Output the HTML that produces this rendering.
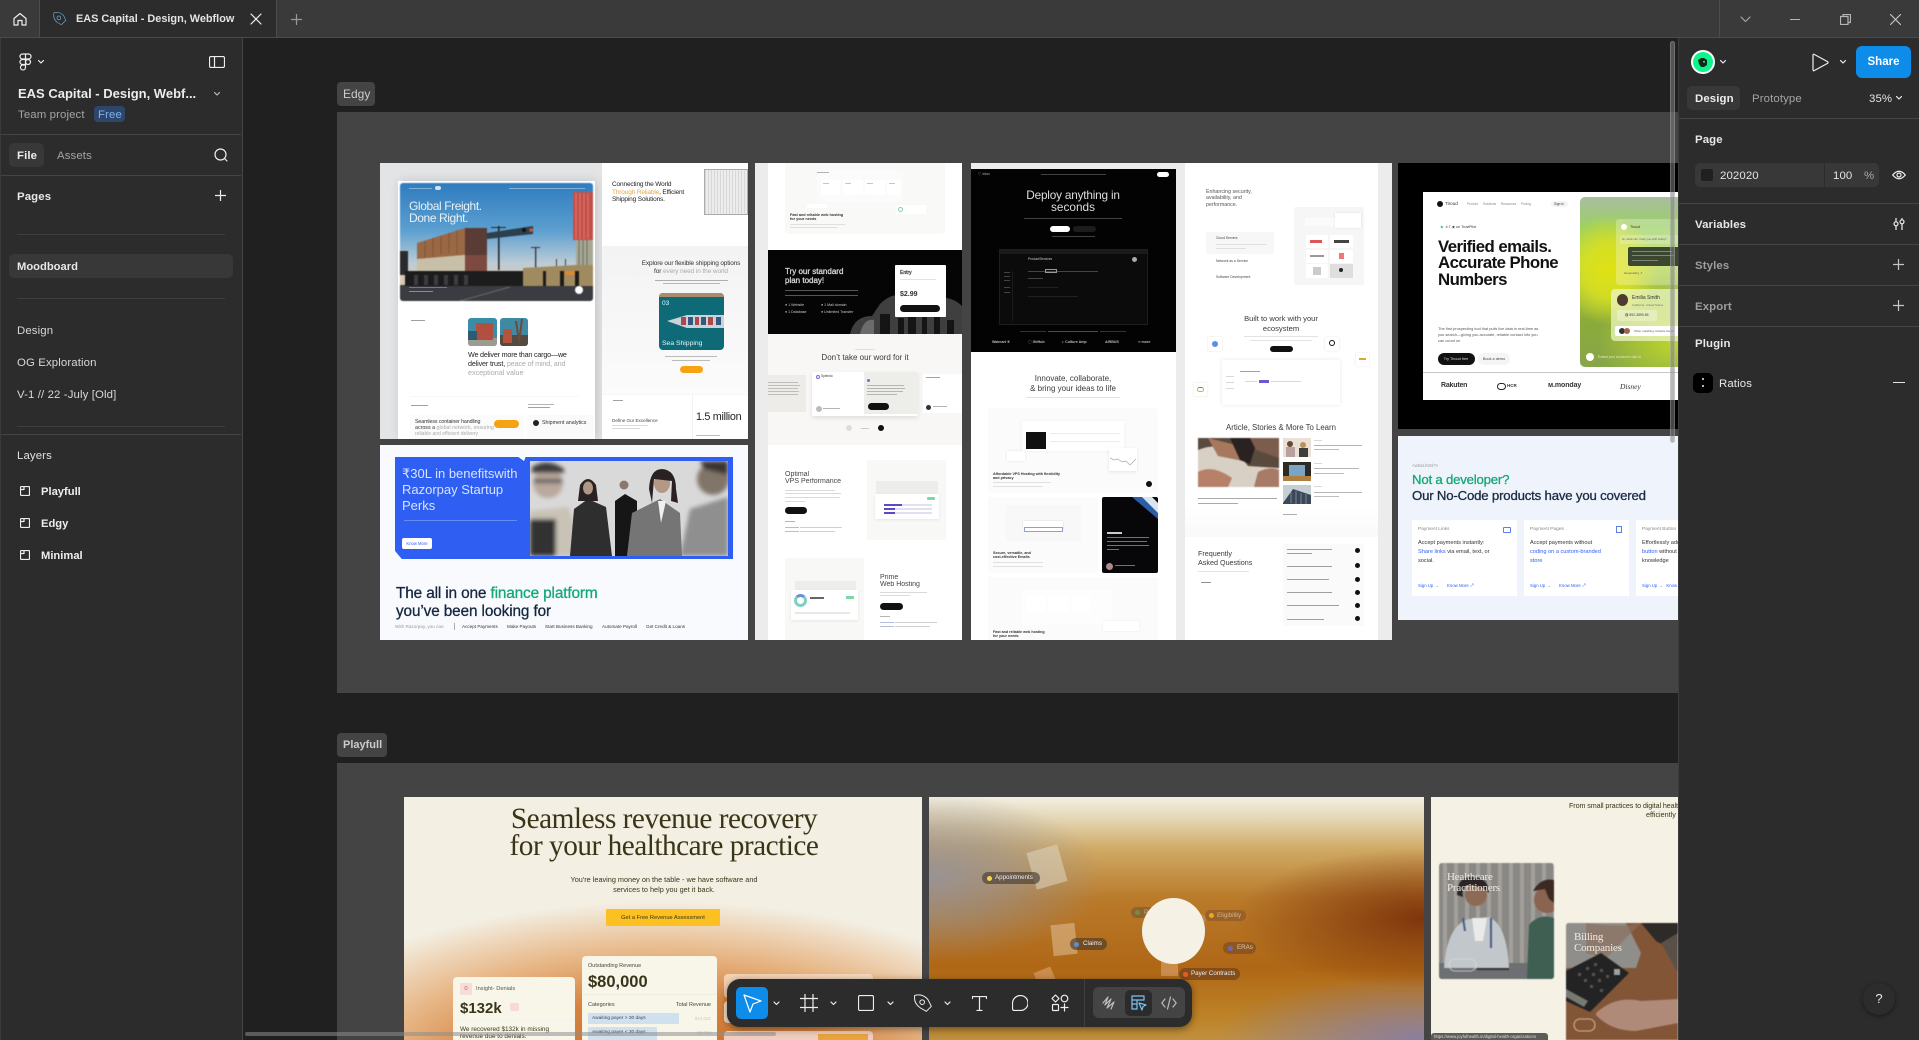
<!DOCTYPE html>
<html lang="en"><head><meta charset="utf-8"><title>EAS Capital - Design, Webflow</title>
<style>
html,body{margin:0;padding:0;width:1919px;height:1040px;overflow:hidden;background:#202020}
body{position:relative;font-family:"Liberation Sans","Noto Sans CJK SC",sans-serif;color:#eee}
div,svg{position:absolute;display:block}
.t{line-height:0;white-space:nowrap}
.c{transform:translateX(-50%)}
.b{font-weight:bold}
.s{-webkit-text-stroke:.3px currentColor}
.i{fill:none;stroke:#eee;stroke-width:1.2;stroke-linecap:round;stroke-linejoin:round}
.bl{filter:blur(.35px)}
.p{filter:blur(.6px)}
.t[style*="font-size:11.4px"],.t[style*="font-size:11.2px"]{margin-top:1px}
.t[style*="font-size:11.4px"]{letter-spacing:.12px}
div[style*="height:1px"]:not([style*="#4"]):not([style*="#3f"]):not([style*="#2c"]){opacity:.55;filter:blur(.25px)}
</style></head><body>

<!-- CANVAS -->
<div style="left:242px;top:38px;width:1436px;height:1002px;background:#202020;overflow:hidden"></div>
<div style="left:337px;top:82px;width:38px;height:24px;background:#444;border-radius:4px"></div>
<div class="t" style="left:343px;top:94px;font-size:12px;color:#ccc">Edgy</div>
<div style="left:337px;top:112px;width:1341px;height:581px;background:#444"></div>
<div style="left:337px;top:733px;width:50px;height:24px;background:#444;border-radius:4px"></div>
<div class="t b" style="left:343px;top:745px;font-size:11px;color:#ccc">Playfull</div>
<div style="left:337px;top:763px;width:1341px;height:277px;background:#444"></div>

<!-- FRAME 1 -->
<div class="bl" style="left:380px;top:163px;width:368px;height:276px;background:#e3e4e6;overflow:hidden"></div>
<div class="bl" style="left:398px;top:181px;width:197px;height:258px;background:#fff;box-shadow:2px 0 10px rgba(0,0,0,.15)"></div>
<svg class="p" style="left:400px;top:183px;border-radius:3px" width="193" height="118" viewBox="0 0 193 118">
<defs><linearGradient id="sky" x1="0" y1="0" x2="0" y2="1"><stop offset="0" stop-color="#2f7cbf"/><stop offset=".4" stop-color="#5c9fd0"/><stop offset=".68" stop-color="#bcccd6"/><stop offset=".8" stop-color="#d8c8b4"/></linearGradient></defs>
<rect width="193" height="118" fill="url(#sky)"/>
<polygon points="0,102 193,100 193,118 0,118" fill="#3a3c41"/>
<path d="M60 118 L110 104" stroke="#77787c" stroke-width=".7"/>
<rect x="0" y="68" width="8" height="24" fill="#2b2a2c"/>
<polygon points="17,60 65,45 65,72 17,76" fill="#9a6844"/>
<polygon points="17,76 65,72 65,88 17,88" fill="#c8bfa8"/>
<rect x="65" y="45" width="22" height="27" fill="#5a3b35"/>
<rect x="65" y="72" width="22" height="16" fill="#7c4a40"/>
<g stroke="#6f4a30" stroke-width=".6"><path d="M25 58v17M33 55v19M41 53v18M49 50v20M57 47v24"/></g>
<rect x="98" y="43" width="1.6" height="44" fill="#26272a"/><rect x="91" y="44" width="15" height="1" fill="#26272a"/>
<polygon points="87,50 133,43 133,51 87,56" fill="#2d3e4e"/><circle cx="124" cy="47" r="2" fill="#111"/><circle cx="131" cy="47" r="1.8" fill="#d8572a"/>
<rect x="135" y="64" width="1.3" height="22" fill="#333"/><rect x="131" y="64" width="9" height="1" fill="#333"/>
<rect x="156" y="76" width="1" height="10" fill="#444"/><rect x="165" y="76" width="1" height="10" fill="#444"/>
<rect x="5" y="88" width="120" height="15" fill="#1d1c1d"/>
<g fill="#3d3d3f"><rect x="14" y="92" width="4" height="10"/><rect x="24" y="92" width="4" height="10"/><rect x="34" y="92" width="4" height="10"/><rect x="44" y="92" width="4" height="10"/><rect x="54" y="92" width="4" height="10"/><rect x="64" y="92" width="4" height="10"/></g>
<polygon points="123,85 193,81 193,103 123,103" fill="#a08a60"/><rect x="143" y="88" width="3" height="15" fill="#1e1c1a"/><rect x="160" y="88" width="4" height="15" fill="#1e1c1a"/><rect x="175" y="88" width="4" height="15" fill="#1e1c1a"/><rect x="165" y="88" width="10" height="4" fill="#d88a30"/>
<rect x="173" y="9" width="20" height="48" fill="#c44f48"/>
<g stroke="#e59084" stroke-width=".7"><path d="M176 10v46M180 10v46M184 10v46M188 10v46"/></g>
<rect x="176" y="57" width="17" height="25" fill="#a7a793"/>
<g stroke="#55564a" stroke-width=".7"><path d="M179 57v25M183 57v25M187 57v25"/></g>
<circle cx="179" cy="107" r="4" fill="#fff"/>
</svg>
<div class="t" style="left:409px;top:206px;font-size:12px;letter-spacing:-.4px;color:#e8f1f6">Global Freight.</div>
<div class="t" style="left:409px;top:218px;font-size:12px;letter-spacing:-.4px;color:#e8f1f6">Done Right.</div>
<div style="left:409px;top:188px;width:23px;height:1px;background:#bcd8e8"></div>
<div style="left:509px;top:188px;width:76px;height:1px;background:#c5dcea"></div>
<div style="left:435px;top:186px;width:6px;height:4px;background:#cfe4f0;border-radius:2px"></div>
<div style="left:409px;top:287px;width:38px;height:1px;background:#aab"></div>
<div style="left:409px;top:291px;width:24px;height:1px;background:#ccd"></div>

<div style="left:411px;top:320px;width:14px;height:1px;background:#555"></div>
<svg class="bl" style="left:468px;top:318px;border-radius:3px" width="29" height="28" viewBox="0 0 29 28"><rect width="29" height="28" fill="#3a8da8"/><rect y="20" width="29" height="8" fill="#9b9b90"/><rect x="8" y="5" width="17" height="17" fill="#b34f3e"/><rect x="0" y="13" width="9" height="9" fill="#2e5b72"/></svg>
<svg class="bl" style="left:500px;top:318px;border-radius:3px" width="28" height="28" viewBox="0 0 28 28"><rect width="28" height="28" fill="#3f89a2"/><rect y="17" width="28" height="11" fill="#524b42"/><rect x="3" y="11" width="9" height="14" fill="#b5533c"/><path d="M16 3l3 20M22 1l-3 24" stroke="#6d4a3a" stroke-width="2"/></svg>
<div class="t bl" style="left:468px;top:355px;font-size:7.2px;letter-spacing:-.2px;color:#222">We deliver more than cargo—we</div>
<div class="t bl" style="left:468px;top:364px;font-size:7.2px;letter-spacing:-.15px;color:#222">deliver trust, <span style="color:#aaa">peace of mind, and</span></div>
<div class="t bl" style="left:468px;top:373px;font-size:7.2px;color:#aaa">exceptional value</div>
<div style="left:410px;top:396px;width:170px;height:1px;background:#f4f4f4"></div>
<div style="left:411px;top:405px;width:17px;height:1px;background:#555"></div>
<div style="left:528px;top:404px;width:26px;height:1px;background:#777"></div><div style="left:528px;top:407px;width:22px;height:1px;background:#555"></div>
<div style="left:410px;top:415px;width:114px;height:24px;background:#fbfbfb"></div>
<div style="left:527px;top:415px;width:67px;height:24px;background:#fafafa"></div>
<div class="t bl" style="left:415px;top:422px;font-size:5.3px;letter-spacing:-.1px;color:#333">Seamless container handling</div>
<div class="t bl" style="left:415px;top:428px;font-size:5.3px;color:#333">across a <span style="color:#aaa">global network, ensuring</span></div>
<div class="t bl" style="left:415px;top:434px;font-size:5px;color:#aaa">reliable and efficient delivery</div>
<div style="left:494px;top:420px;width:25px;height:8px;border-radius:4px;background:#f5a312"></div>
<div style="left:533px;top:420px;width:6px;height:6px;border-radius:50%;background:#222"></div>
<div class="t bl" style="left:542px;top:423px;font-size:5.3px;color:#333">Shipment analytics</div>

<!-- Frame 1 right -->
<div style="left:602px;top:163px;width:146px;height:83px;background:#fff"></div>
<div style="left:602px;top:246px;width:146px;height:148px;background:linear-gradient(#f3f3f3,#fbfbfb)"></div>
<div style="left:602px;top:394px;width:146px;height:45px;background:#fff"></div>
<div class="t bl" style="left:612px;top:185px;font-size:6.5px;letter-spacing:-.15px;color:#222">Connecting the World</div>
<div class="t bl" style="left:612px;top:193px;font-size:6.5px;letter-spacing:-.15px;color:#e9a93a">Through Reliable<span style="color:#222">, Efficient</span></div>
<div class="t bl" style="left:612px;top:200px;font-size:6.5px;letter-spacing:-.15px;color:#222">Shipping Solutions.</div>
<div style="left:704px;top:169px;width:44px;height:46px;background:repeating-linear-gradient(90deg,#d8d8d8 0,#d8d8d8 1px,#ececec 1px,#ececec 3px);border:1px solid #aaa;box-sizing:border-box"></div>
<div class="t c bl" style="left:691px;top:264px;font-size:6.5px;letter-spacing:-.15px;color:#333">Explore our flexible shipping options</div>
<div class="t c bl" style="left:691px;top:272px;font-size:6.5px;letter-spacing:-.1px;color:#aaa"><span style="color:#333">for</span> every need in the world</div>
<div style="left:655px;top:280px;width:73px;height:1px;background:#777"></div>
<div style="left:663px;top:283px;width:57px;height:1px;background:#888"></div>
<svg class="bl" style="left:659px;top:293px;border-radius:4px" width="65" height="57" viewBox="0 0 65 57"><rect width="65" height="57" fill="#0f6a78"/><rect width="65" height="4" fill="#a88d6e"/><polygon points="8,28 28,22 65,22 65,35 28,35" fill="#c9d3d8"/><g fill="#b0454a"><rect x="22" y="24" width="5" height="8"/><rect x="36" y="24" width="4" height="8"/><rect x="49" y="24" width="5" height="8"/></g><g fill="#34597e"><rect x="29" y="24" width="5" height="8"/><rect x="42" y="24" width="5" height="8"/><rect x="57" y="24" width="5" height="8"/></g></svg>
<div class="t bl" style="left:662px;top:304px;font-size:6.5px;color:#dff">03</div>
<div class="t bl" style="left:662px;top:344px;font-size:6.8px;color:#e8f4f4">Sea Shipping</div>
<div style="left:665px;top:356px;width:52px;height:1px;background:#888"></div>
<div style="left:672px;top:360px;width:38px;height:1px;background:#888"></div>
<div style="left:680px;top:366px;width:23px;height:7px;border-radius:4px;background:#f5a312"></div>
<div style="left:692px;top:394px;width:1px;height:45px;background:#f2f2f2"></div>
<div style="left:602px;top:394px;width:146px;height:1px;background:#f2f2f2"></div>
<div style="left:613px;top:400px;width:10px;height:1px;background:#555"></div>
<div class="t bl" style="left:612px;top:421px;font-size:4.6px;color:#444">Define Our Excellence</div>
<div style="left:612px;top:425px;width:36px;height:1px;background:#bbb"></div><div style="left:612px;top:428px;width:28px;height:1px;background:#bbb"></div>
<div class="t bl" style="left:696px;top:417px;font-size:10.8px;letter-spacing:-.3px;color:#222">1.5 million</div>
<div style="left:696px;top:435px;width:24px;height:1px;background:#888"></div>

<!-- RAZORPAY 1 -->
<div style="left:380px;top:445px;width:368px;height:195px;background:#f8fafd"></div>
<div class="bl" style="left:395px;top:457px;width:338px;height:102px;background:#2e5ef2;clip-path:polygon(0 0,36.5% 0,38.2% 4%,38.6% 0,100% 0,100% 100%,2% 100%,0 92%)"></div>
<svg style="left:530px;top:461px" width="198" height="95" viewBox="0 0 198 95">
<defs><filter id="f1"><feGaussianBlur stdDeviation="2.2"/></filter><filter id="f2"><feGaussianBlur stdDeviation=".3"/></filter></defs>
<rect width="198" height="95" fill="#d9d9d9"/>
<g filter="url(#f1)"><path d="M0 50 L38 46 L58 95 H0Z" fill="#c9c2b6"/><rect x="0" y="58" width="26" height="37" fill="#303030"/><circle cx="18" cy="22" r="15" fill="#b9a89c"/><path d="M2 6 Q18 -4 34 8 L34 12 H2Z" fill="#3a3a3a"/><rect x="4" y="18" width="28" height="4" fill="#555"/><path d="M150 95 L160 48 L198 36 V95Z" fill="#8f8f8f"/><circle cx="183" cy="18" r="16" fill="#807468"/><path d="M170 0 H198 V14 L174 8Z" fill="#3a3430"/></g>
<g filter="url(#f2)"><path d="M40 95 L44 48 L58 38 L76 46 L82 95Z" fill="#2f2f2f"/><path d="M50 24 Q58 12 66 24 L68 40 L48 40Z" fill="#2a2320"/><ellipse cx="58" cy="27" rx="5" ry="6.5" fill="#b09785"/>
<path d="M85 95 V40 L95 33 L107 40 V95Z" fill="#181818"/><circle cx="94" cy="24" r="4.5" fill="#8a786c"/>
<path d="M97 95 L102 52 L130 38 L150 52 L152 95Z" fill="#757575"/><path d="M128 40 L131 62 L136 40Z" fill="#f0f0f0"/><ellipse cx="132" cy="22" rx="8" ry="10" fill="#b39886"/><path d="M119 28 Q120 8 132 8 Q146 9 146 28 L148 42 L141 40 L142 20 L124 18 L122 42Z" fill="#2a2320"/></g>
</svg>
<div class="t bl" style="left:402px;top:474px;font-size:13px;color:#d6e3ff">₹30L in benefitswith</div>
<div class="t bl" style="left:402px;top:490px;font-size:13px;color:#d6e3ff">Razorpay Startup</div>
<div class="t bl" style="left:402px;top:506px;font-size:13px;color:#d6e3ff">Perks</div>
<div style="left:404px;top:520px;width:113px;height:1px;background:rgba(255,255,255,.5)"></div>
<div style="left:402px;top:538px;width:30px;height:11px;background:#fff;border-radius:2px"></div>
<div class="t c bl" style="left:417px;top:544px;font-size:4.2px;color:#2e5ef2">Know More</div>
<div class="t bl s" style="left:396px;top:594px;font-size:15.4px;letter-spacing:-.15px;color:#15263f">The all in one <span style="color:#14a876">finance platform</span></div>
<div class="t bl s" style="left:396px;top:612px;font-size:15.3px;letter-spacing:-.1px;color:#15263f">you’ve been looking for</div>
<div class="t bl" style="left:395px;top:627px;font-size:4.6px;color:#999">With Razorpay, you can:</div>
<div style="left:454px;top:623px;width:1px;height:7px;background:#aaa"></div>
<div class="t bl" style="left:462px;top:627px;font-size:4.6px;color:#333">Accept Payments</div>
<div class="t bl" style="left:507px;top:627px;font-size:4.6px;color:#333">Make Payouts</div>
<div class="t bl" style="left:545px;top:627px;font-size:4.6px;color:#333">Start Business Banking</div>
<div class="t bl" style="left:602px;top:627px;font-size:4.6px;color:#333">Automate Payroll</div>
<div class="t bl" style="left:646px;top:627px;font-size:4.6px;color:#333">Get Credit &amp; Loans</div>

<!-- COLUMN 2 -->
<div style="left:755px;top:163px;width:207px;height:477px;background:#ececec"></div>
<div style="left:768px;top:163px;width:194px;height:477px;background:#fff"></div>
<div style="left:785px;top:163px;width:160px;height:71px;background:#f9f9f8;border-radius:0 0 3px 3px"></div>
<div style="left:817px;top:170px;width:86px;height:32px;background:#fbfbfb"></div>
<div style="left:821px;top:180px;width:19px;height:15px;background:#fff"></div><div style="left:843px;top:180px;width:20px;height:15px;background:#fff"></div><div style="left:865px;top:180px;width:20px;height:15px;background:#fff"></div><div style="left:887px;top:180px;width:14px;height:15px;background:#fff"></div>
<div style="left:823px;top:183px;width:6px;height:1px;background:#999"></div><div style="left:845px;top:183px;width:6px;height:1px;background:#999"></div><div style="left:867px;top:183px;width:6px;height:1px;background:#999"></div><div style="left:889px;top:183px;width:6px;height:1px;background:#999"></div>
<div style="left:817px;top:172px;width:12px;height:1px;background:#777"></div>
<div style="left:807px;top:204px;width:20px;height:4px;background:#fff"></div><div style="left:896px;top:205px;width:30px;height:9px;background:#fff"></div>
<div style="left:898px;top:207px;width:5px;height:5px;border:1px solid #7fd0b0;border-radius:50%;box-sizing:border-box"></div>
<div class="t bl b" style="left:790px;top:215px;font-size:3.8px;color:#333">Fast and reliable web hosting</div>
<div class="t bl b" style="left:790px;top:219px;font-size:3.8px;color:#333">for your needs</div>
<div style="left:790px;top:224px;width:55px;height:1px;background:#ccc"></div><div style="left:790px;top:227px;width:48px;height:1px;background:#ccc"></div>

<div style="left:768px;top:250px;width:194px;height:84px;background:#050505;overflow:hidden"></div>
<svg class="bl" style="left:850px;top:284px" width="112" height="50" viewBox="0 0 112 50"><path d="M0 50 Q4 32 22 32 L30 20 Q45 5 62 15 L68 18 L80 15 Q100 10 112 22 V50Z" fill="#3f3f3f"/><path d="M10 50 Q14 34 24 36 V50Z" fill="#6b6b6b"/><g fill="#151515"><rect x="30" y="30" width="10" height="20"/><rect x="48" y="34" width="6" height="16"/><rect x="58" y="28" width="8" height="22"/><rect x="72" y="32" width="5" height="18"/><rect x="84" y="30" width="6" height="20"/><rect x="97" y="36" width="7" height="14"/></g></svg>
<div class="t bl s" style="left:785px;top:272px;font-size:8px;color:#d8d8d8">Try our standard</div>
<div class="t bl s" style="left:785px;top:281px;font-size:8px;color:#d8d8d8">plan today!</div>
<div style="left:785px;top:289.5px;width:73px;height:1px;background:#999"></div><div style="left:785px;top:294.5px;width:73px;height:1px;background:#999"></div>
<div class="t bl" style="left:785px;top:305px;font-size:3.6px;color:#ccc">● 1 Website</div><div class="t bl" style="left:785px;top:312px;font-size:3.6px;color:#ccc">● 1 Database</div>
<div class="t bl" style="left:821px;top:305px;font-size:3.6px;color:#ccc">● 1 Mail domain</div><div class="t bl" style="left:821px;top:312px;font-size:3.6px;color:#ccc">● Unlimited Transfer</div>
<div style="left:895px;top:265px;width:51px;height:52px;background:#fff;border-radius:1px"></div>
<div class="t bl s" style="left:900px;top:273px;font-size:5px;color:#444">Entry</div>
<div style="left:900px;top:279px;width:36px;height:1px;background:#ccc"></div>
<div class="t bl b" style="left:900px;top:295px;font-size:7px;color:#333">$2.99</div>
<div style="left:900px;top:305px;width:40px;height:7px;border-radius:4px;background:#111"></div>

<div style="left:768px;top:334px;width:194px;height:111px;background:#f8f7f5"></div>
<div class="t c bl" style="left:865px;top:358px;font-size:8px;color:#3a3a3a">Don’t take our word for it</div>
<div style="left:855px;top:349px;width:20px;height:1px;background:#ccc"></div>
<div style="left:768px;top:375px;width:38px;height:37px;background:#edece9"></div>
<div style="left:768px;top:382px;width:30px;height:1px;background:#999"></div><div style="left:768px;top:385px;width:32px;height:1px;background:#999"></div><div style="left:768px;top:388px;width:30px;height:1px;background:#999"></div><div style="left:768px;top:391px;width:31px;height:1px;background:#999"></div><div style="left:768px;top:394px;width:30px;height:1px;background:#999"></div>
<div style="left:812px;top:372px;width:106px;height:44px;background:#fff;box-shadow:0 2px 5px rgba(0,0,0,.1);border-radius:2px"></div>
<div style="left:864px;top:372px;width:54px;height:42px;background:#ededea"></div>
<div style="left:867px;top:379px;width:3px;height:3px;background:#7a66d9;border-radius:50%"></div>
<div style="left:867px;top:385px;width:37px;height:1px;background:#888"></div><div style="left:867px;top:388px;width:38px;height:1px;background:#888"></div><div style="left:867px;top:391px;width:36px;height:1px;background:#888"></div><div style="left:867px;top:394px;width:30px;height:1px;background:#888"></div>
<div style="left:868px;top:403px;width:21px;height:7px;background:#111;border-radius:4px"></div>
<div style="left:816px;top:375px;width:4px;height:4px;border-radius:50%;border:.8px solid #7a66d9;box-sizing:border-box"></div>
<div class="t bl" style="left:821px;top:376px;font-size:3.2px;color:#333">Splendo</div>
<div style="left:816px;top:406px;width:6px;height:6px;border-radius:50%;background:#bbb"></div>
<div style="left:823px;top:408px;width:17px;height:1px;background:#777"></div>
<div style="left:923px;top:374px;width:39px;height:39px;background:#fff"></div>
<div style="left:926px;top:377px;width:14px;height:1px;background:#555"></div>
<div style="left:926px;top:405px;width:5px;height:5px;border-radius:50%;background:#333"></div><div style="left:933px;top:406px;width:14px;height:1px;background:#777"></div>
<div style="left:846px;top:425px;width:6px;height:6px;border-radius:50%;background:#ddd"></div>
<div style="left:878px;top:425px;width:6px;height:6px;border-radius:50%;background:#111"></div>
<div style="left:861px;top:427.5px;width:8px;height:1px;background:#aaa"></div>

<div class="t bl" style="left:785px;top:475px;font-size:7px;color:#444">Optimal</div>
<div class="t bl" style="left:785px;top:482px;font-size:7px;color:#444">VPS Performance</div>
<div style="left:785px;top:490px;width:50px;height:1px;background:#bbb"></div><div style="left:785px;top:493px;width:56px;height:1px;background:#bbb"></div><div style="left:785px;top:497px;width:55px;height:1px;background:#bbb"></div><div style="left:785px;top:501px;width:20px;height:1px;background:#bbb"></div>
<div style="left:785px;top:507px;width:22px;height:7px;border-radius:4px;background:#111"></div>
<div style="left:785px;top:520.5px;width:10px;height:1px;background:#777"></div>
<div style="left:785px;top:526.5px;width:14px;height:1px;background:#7a86c8"></div><div style="left:800px;top:526.5px;width:42px;height:1px;background:#aaa"></div>
<div style="left:785px;top:530.5px;width:14px;height:1px;background:#7a86c8"></div><div style="left:800px;top:530.5px;width:35px;height:1px;background:#aaa"></div>
<div style="left:867px;top:460px;width:79px;height:80px;background:#f8f8f6;border-radius:2px"></div>
<div style="left:876px;top:481px;width:62px;height:14px;background:#ededeb"></div>
<div style="left:875px;top:494px;width:64px;height:25px;background:#fff;box-shadow:0 1px 3px rgba(0,0,0,.08)"></div>
<div style="left:884px;top:504px;width:18px;height:2px;background:#5a4bc0"></div><div style="left:884px;top:508px;width:11px;height:2px;background:#5a4bc0"></div><div style="left:884px;top:512px;width:11px;height:2px;background:#5a4bc0"></div>
<div style="left:902px;top:504px;width:30px;height:2px;background:#e2e0f0"></div><div style="left:895px;top:508px;width:37px;height:2px;background:#e2e0f0"></div><div style="left:895px;top:512px;width:37px;height:2px;background:#e2e0f0"></div>
<div style="left:927px;top:497px;width:8px;height:3px;background:#7ed8a5;border-radius:1px"></div>
<div style="left:785px;top:558px;width:79px;height:82px;background:#f8f8f6;border-radius:2px"></div>
<div style="left:795px;top:581px;width:61px;height:10px;background:#ededeb"></div>
<div style="left:791px;top:590px;width:67px;height:30px;background:#fff;box-shadow:0 1px 3px rgba(0,0,0,.08)"></div>
<div style="left:794px;top:594px;width:13px;height:13px;border-radius:50%;border:3px solid #7fd0c0;border-top-color:#6a8fd8;box-sizing:border-box"></div>
<div style="left:810px;top:597px;width:14px;height:2px;background:#666"></div><div style="left:846px;top:596px;width:8px;height:3px;background:#7ed8a5"></div>
<div style="left:795px;top:612px;width:55px;height:2px;background:#e8e8e8"></div>
<div class="t bl" style="left:880px;top:578px;font-size:7px;color:#444">Prime</div>
<div class="t bl" style="left:880px;top:585px;font-size:7px;color:#444">Web Hosting</div>
<div style="left:880px;top:592px;width:47px;height:1px;background:#bbb"></div><div style="left:880px;top:595px;width:30px;height:1px;background:#bbb"></div>
<div style="left:880px;top:603px;width:23px;height:7px;border-radius:4px;background:#111"></div>
<div style="left:880px;top:616px;width:10px;height:1px;background:#777"></div>
<div style="left:880px;top:622px;width:14px;height:1px;background:#7a86c8"></div><div style="left:895px;top:622px;width:42px;height:1px;background:#aaa"></div>
<div style="left:880px;top:626px;width:14px;height:1px;background:#7a86c8"></div><div style="left:895px;top:626px;width:35px;height:1px;background:#aaa"></div>

<!-- COLUMN 3 -->
<div style="left:971px;top:163px;width:205px;height:477px;background:#fff"></div>
<div style="left:971px;top:163px;width:421px;height:6px;background:#ececec"></div>
<div style="left:971px;top:169px;width:205px;height:183px;background:#030303"></div>
<div class="t bl" style="left:978px;top:174px;font-size:3.2px;color:#aaa">▽ vidan</div>
<div style="left:1041px;top:174px;width:65px;height:1px;background:#777"></div>
<div style="left:1157px;top:172px;width:12px;height:5px;border-radius:3px;background:#fff"></div>
<div class="t c bl" style="left:1073px;top:195px;font-size:11.8px;letter-spacing:-.2px;color:#ddd">Deploy anything in</div>
<div class="t c bl" style="left:1073px;top:207px;font-size:11.8px;color:#ddd">seconds</div>
<div style="left:1024px;top:218px;width:98px;height:1px;background:#777"></div>
<div style="left:1050px;top:226px;width:20px;height:6px;border-radius:3px;background:#fff"></div>
<div style="left:1073px;top:226px;width:23px;height:6px;border-radius:3px;background:#1c1c1c"></div>
<div style="left:1052px;top:236px;width:43px;height:1px;background:#777"></div>
<div style="left:999px;top:249px;width:149px;height:76px;background:#0b0b0b;border:1px solid #1e1e1e;box-sizing:border-box"></div>
<div style="left:1000px;top:250px;width:147px;height:4px;background:#1a1a1a"></div>
<div class="t bl" style="left:1028px;top:259px;font-size:3.2px;color:#ccc">Product/Services</div>
<div style="left:1012px;top:271px;width:1px;height:50px;background:#1b1b1b"></div>
<div style="left:1004px;top:272px;width:6px;height:1px;background:#444"></div><div style="left:1004px;top:276px;width:6px;height:1px;background:#444"></div><div style="left:1004px;top:280px;width:6px;height:1px;background:#444"></div><div style="left:1004px;top:287px;width:6px;height:1px;background:#444"></div><div style="left:1004px;top:292px;width:6px;height:1px;background:#444"></div>
<div style="left:1028px;top:271px;width:70px;height:1px;background:#444"></div><div style="left:1028px;top:278px;width:15px;height:1px;background:#444"></div><div style="left:1028px;top:287px;width:30px;height:1px;background:#333"></div><div style="left:1028px;top:296px;width:50px;height:1px;background:#333"></div>
<div style="left:1045px;top:269px;width:12px;height:4px;border:.5px solid #999;box-sizing:border-box"></div>
<div style="left:1132px;top:257px;width:5px;height:5px;border-radius:50%;background:#aaa"></div>
<div style="left:1048px;top:330.5px;width:50px;height:1px;background:#888"></div>
<div style="left:1020px;top:331px;width:26px;height:.5px;background:#333"></div>
<div style="left:1100px;top:331px;width:26px;height:.5px;background:#333"></div>
<div class="t bl b" style="left:992px;top:342px;font-size:3.6px;color:#bbb">Walmart ✳</div>
<div class="t bl b" style="left:1028px;top:342px;font-size:3.6px;color:#bbb">◯ GitHub</div>
<div class="t bl b" style="left:1062px;top:342px;font-size:3.6px;color:#bbb">◐ Culture Amp</div>
<div class="t bl b" style="left:1105px;top:342px;font-size:3.6px;color:#bbb">AIRBUS</div>
<div class="t bl b" style="left:1138px;top:342px;font-size:3.6px;color:#bbb">∞ more</div>
<div class="t c bl" style="left:1073px;top:379px;font-size:8px;color:#3a3a3a">Innovate, collaborate,</div>
<div class="t c bl" style="left:1073px;top:389px;font-size:8px;color:#3a3a3a">&amp; bring your ideas to life</div>
<div style="left:1026px;top:397px;width:94px;height:1px;background:#ccc"></div>
<div style="left:988px;top:408px;width:170px;height:85px;background:#fbfbfb;border-radius:2px"></div>
<div style="left:1022px;top:421px;width:102px;height:30px;background:#fff;box-shadow:0 0 3px rgba(0,0,0,.06)"></div>
<div style="left:1026px;top:432px;width:20px;height:17px;background:#101010"></div>
<div style="left:1050px;top:433px;width:70px;height:1px;background:#ddd"></div><div style="left:1050px;top:441px;width:70px;height:1px;background:#ddd"></div>
<div style="left:1109px;top:448px;width:28px;height:23px;background:#fff;box-shadow:0 1px 3px rgba(0,0,0,.1)"></div>
<svg style="left:1110px;top:456px" width="26" height="12" viewBox="0 0 26 12"><path d="M0 2 L4 4 L8 3 L12 6 L16 5 L20 9 L26 3" fill="none" stroke="#aaa" stroke-width=".7"/></svg>
<div style="left:1007px;top:451px;width:18px;height:10px;background:#fff;box-shadow:0 0 2px rgba(0,0,0,.1)"></div>
<div class="t bl b" style="left:993px;top:474px;font-size:3.7px;color:#333">Affordable VPS Hosting with flexibility</div>
<div class="t bl b" style="left:993px;top:477.5px;font-size:3.7px;color:#333">and privacy</div>
<div style="left:993px;top:482px;width:58px;height:1px;background:#ccc"></div><div style="left:993px;top:486px;width:50px;height:1px;background:#ccc"></div>
<div style="left:1146px;top:481px;width:6px;height:6px;border-radius:50%;background:#111"></div>
<div style="left:988px;top:497px;width:110px;height:76px;background:#fbfbfb;border-radius:2px"></div>
<div style="left:1006px;top:505px;width:75px;height:36px;background:#f8f8f8"></div>
<div style="left:1023px;top:521px;width:40px;height:9px;background:#fff;box-shadow:0 0 2px rgba(0,0,0,.15)"></div><div style="left:1024px;top:527px;width:39px;height:5px;background:#fff;border:.5px solid #8f9fd8;box-sizing:border-box"></div>
<div class="t bl b" style="left:993px;top:553px;font-size:3.7px;color:#333">Secure, versatile, and</div>
<div class="t bl b" style="left:993px;top:557px;font-size:3.7px;color:#333">cost-effective Emails</div>
<div style="left:993px;top:562px;width:50px;height:1px;background:#ccc"></div><div style="left:993px;top:566px;width:50px;height:1px;background:#ccc"></div>
<svg class="bl" style="left:1102px;top:497px;border-radius:2px" width="56" height="76" viewBox="0 0 56 76"><rect width="56" height="76" fill="#07070a"/><path d="M30 0 L56 22 V12 L44 0Z" fill="#2a5fa8"/><path d="M40 0 L56 16 V6 L50 0Z" fill="#d8e4f0"/></svg>
<div style="left:1107px;top:532px;width:15px;height:1.5px;background:#ccc"></div>
<div style="left:1107px;top:537px;width:42px;height:1px;background:#ccc"></div><div style="left:1107px;top:541px;width:40px;height:1px;background:#ccc"></div><div style="left:1107px;top:545px;width:42px;height:1px;background:#ccc"></div><div style="left:1107px;top:549px;width:12px;height:1px;background:#ccc"></div>
<div style="left:1106px;top:563px;width:7px;height:7px;border-radius:50%;background:#b08a8a"></div>
<div style="left:1115px;top:564.5px;width:20px;height:1px;background:#ccc"></div>
<div style="left:988px;top:577px;width:170px;height:63px;background:#fbfbfb"></div>
<div style="left:1022px;top:590px;width:90px;height:35px;background:#fdfdfd"></div>
<div style="left:1027px;top:596px;width:18px;height:16px;background:#fff"></div><div style="left:1048px;top:596px;width:20px;height:16px;background:#fff"></div><div style="left:1072px;top:596px;width:18px;height:16px;background:#fff"></div>
<div style="left:1103px;top:621px;width:36px;height:10px;background:#fff;box-shadow:0 0 2px rgba(0,0,0,.08)"></div>
<div class="t bl b" style="left:993px;top:632px;font-size:3.7px;color:#333">Fast and reliable web hosting</div>
<div class="t bl b" style="left:993px;top:636px;font-size:3.7px;color:#333">for your needs</div>

<!-- COLUMN 4 -->
<div style="left:1176px;top:169px;width:216px;height:471px;background:#ececec"></div>
<div style="left:1185px;top:163px;width:193px;height:477px;background:#fff"></div>
<div class="t bl" style="left:1206px;top:192px;font-size:5.3px;color:#555">Enhancing security,</div>
<div class="t bl" style="left:1206px;top:198px;font-size:5.3px;color:#555">availability, and</div>
<div class="t bl" style="left:1206px;top:205px;font-size:5.3px;color:#555">performance.</div>
<div style="left:1294px;top:207px;width:70px;height:78px;background:#f6f6f6;border-radius:2px"></div>
<div style="left:1305px;top:218px;width:45px;height:8px;background:#fbfbfb"></div>
<div style="left:1335px;top:213px;width:26px;height:15px;background:#fff;box-shadow:0 0 2px rgba(0,0,0,.1)"></div>
<div style="left:1306px;top:235px;width:22px;height:13px;background:#fff"></div><div style="left:1330px;top:235px;width:23px;height:13px;background:#fff"></div>
<div class="bl" style="left:1310px;top:240px;width:12px;height:3px;background:#d55"></div><div class="bl" style="left:1334px;top:240px;width:15px;height:3px;background:#444"></div>
<div style="left:1306px;top:250px;width:22px;height:13px;background:#fff"></div><div style="left:1330px;top:250px;width:23px;height:13px;background:#fff"></div>
<div class="bl" style="left:1310px;top:255px;width:14px;height:2px;background:#999"></div><div class="bl" style="left:1339px;top:253px;width:5px;height:6px;background:#e77"></div>
<div style="left:1306px;top:264px;width:22px;height:14px;background:#fff"></div><div style="left:1330px;top:264px;width:23px;height:14px;background:#dedede"></div>
<div style="left:1339px;top:268px;width:4px;height:4px;border-radius:50%;background:#222"></div><div class="bl" style="left:1313px;top:267px;width:8px;height:8px;background:#999;opacity:.5"></div>
<div style="left:1206px;top:232px;width:68px;height:22px;background:#f7f7f7;border-radius:2px"></div>
<div class="t bl" style="left:1216px;top:238px;font-size:3.4px;color:#444">Cloud Servers</div>
<div style="left:1216px;top:244px;width:50px;height:1px;background:#ccc"></div><div style="left:1216px;top:248px;width:30px;height:1px;background:#ccc"></div>
<div class="t bl" style="left:1216px;top:261px;font-size:3.4px;color:#444">Network as a Service</div>
<div class="t bl" style="left:1216px;top:277px;font-size:3.4px;color:#444">Software Development</div>
<div class="t c bl" style="left:1281px;top:319px;font-size:7.6px;color:#3a3a3a">Built to work with your</div>
<div class="t c bl" style="left:1281px;top:329px;font-size:7.6px;color:#3a3a3a">ecosystem</div>
<div style="left:1244px;top:336px;width:74px;height:1px;background:#ccc"></div><div style="left:1250px;top:340px;width:62px;height:1px;background:#ccc"></div>
<div style="left:1270px;top:346px;width:23px;height:6px;border-radius:3px;background:#111"></div>
<div style="left:1208px;top:337px;width:14px;height:14px;background:#fff;box-shadow:0 0 2px rgba(0,0,0,.12)"></div><div style="left:1212px;top:341px;width:6px;height:6px;border-radius:50%;background:#5b8de8"></div>
<div style="left:1325px;top:337px;width:14px;height:14px;background:#fff;box-shadow:0 0 2px rgba(0,0,0,.12)"></div><div style="left:1329px;top:340px;width:6px;height:6px;border:1.4px solid #111;border-radius:50%;box-sizing:border-box"></div>
<div style="left:1356px;top:353px;width:13px;height:13px;background:#fff;box-shadow:0 0 2px rgba(0,0,0,.12)"></div><div style="left:1359px;top:358px;width:7px;height:2px;background:#d8a93a"></div>
<div style="left:1194px;top:383px;width:13px;height:13px;background:#fff;box-shadow:0 0 2px rgba(0,0,0,.12)"></div><div style="left:1197px;top:387px;width:7px;height:5px;border:1px solid #e8a43a;border-top-color:#4e86e8;border-radius:3px;box-sizing:border-box"></div>
<div style="left:1222px;top:360px;width:118px;height:45px;background:#fff;box-shadow:0 0 4px rgba(0,0,0,.1)"></div>
<div style="left:1240px;top:371px;width:20px;height:1px;background:#555"></div><div style="left:1259px;top:380px;width:10px;height:3px;background:#6b5ad0"></div>
<div style="left:1245px;top:381px;width:12px;height:1px;background:#bbb"></div><div style="left:1271px;top:381px;width:30px;height:1px;background:#bbb"></div>
<div style="left:1226px;top:376px;width:8px;height:1px;background:#bbb"></div><div style="left:1226px;top:382px;width:8px;height:1px;background:#bbb"></div><div style="left:1226px;top:388px;width:8px;height:1px;background:#bbb"></div>
<div class="t c bl" style="left:1281px;top:428px;font-size:7.8px;color:#3a3a3a">Article, Stories &amp; More To Learn</div>
<svg class="p" style="left:1198px;top:438px" width="81" height="49" viewBox="0 0 81 49"><rect width="81" height="49" fill="#5a4a3e"/><path d="M0 12 Q30 0 50 28 L81 30 V49 H0Z" fill="#d8d0c4"/><path d="M10 0 L42 8 L50 24 L20 18Z" fill="#a8785e"/><path d="M32 0 L60 0 L52 26 L42 22Z" fill="#2a2220"/><path d="M52 0 H81 V20 L58 12Z" fill="#7c5c4c"/><path d="M0 34 Q14 26 34 40 L30 49 H0Z" fill="#b68168"/><path d="M60 34 Q72 28 81 32 V49 H56Z" fill="#a77b65"/></svg>
<svg class="bl" style="left:1283px;top:438px" width="28" height="19" viewBox="0 0 28 19"><rect width="28" height="19" fill="#e9e0d6"/><circle cx="7" cy="6" r="3" fill="#6b4636"/><rect x="3" y="9" width="9" height="10" fill="#b9a1a0"/><circle cx="20" cy="7" r="3" fill="#c0905a"/><rect x="16" y="10" width="9" height="9" fill="#3e3e3e"/></svg>
<svg class="bl" style="left:1283px;top:462px" width="28" height="19" viewBox="0 0 28 19"><rect width="28" height="19" fill="#2d2a26"/><rect x="6" y="3" width="16" height="11" fill="#7aa4c4"/><rect y="14" width="28" height="5" fill="#b08040"/></svg>
<svg class="bl" style="left:1283px;top:485px" width="28" height="19" viewBox="0 0 28 19"><rect width="28" height="19" fill="#c7ced4"/><polygon points="0,18 10,4 28,10 28,19 0,19" fill="#3a4858"/><path d="M8 7v11M13 6v13M18 8v11M23 9v10" stroke="#92a0ae" stroke-width=".7"/></svg>
<div style="left:1314px;top:439.5px;width:8px;height:1px;background:#bbb"></div><div style="left:1314px;top:444.5px;width:48px;height:1px;background:#777"></div><div style="left:1314px;top:449px;width:25px;height:1px;background:#888"></div>
<div style="left:1314px;top:463px;width:8px;height:1px;background:#bbb"></div><div style="left:1314px;top:468px;width:45px;height:1px;background:#777"></div><div style="left:1314px;top:472.5px;width:30px;height:1px;background:#888"></div>
<div style="left:1314px;top:486px;width:8px;height:1px;background:#bbb"></div><div style="left:1314px;top:491.5px;width:48px;height:1px;background:#777"></div><div style="left:1314px;top:495.5px;width:25px;height:1px;background:#888"></div>
<div style="left:1198px;top:497.5px;width:79px;height:1px;background:#666"></div><div style="left:1198px;top:502.5px;width:40px;height:1px;background:#666"></div>
<div style="left:1283px;top:514px;width:14px;height:1px;background:#555"></div>
<div style="left:1185px;top:507px;width:193px;height:30px;background:linear-gradient(rgba(255,255,255,0),rgba(245,245,245,.6))"></div>
<div class="t bl" style="left:1198px;top:554px;font-size:7.2px;color:#3a3a3a">Frequently</div>
<div class="t bl" style="left:1198px;top:563px;font-size:7.2px;color:#3a3a3a">Asked Questions</div>
<div style="left:1198px;top:571px;width:51px;height:1px;background:#ccc"></div>
<div style="left:1201px;top:582px;width:10px;height:1px;background:#333"></div>
<div style="left:1283px;top:544px;width:81px;height:82px;background:#fafafa"></div>
<div style="left:1287px;top:549px;width:45px;height:1px;background:#555"></div><div style="left:1287px;top:553px;width:25px;height:1px;background:#555"></div>
<div style="left:1287px;top:566px;width:45px;height:1px;background:#555"></div>
<div style="left:1287px;top:579px;width:42px;height:1px;background:#555"></div>
<div style="left:1287px;top:592px;width:45px;height:1px;background:#555"></div>
<div style="left:1287px;top:605px;width:52px;height:1px;background:#555"></div>
<div style="left:1287px;top:619px;width:37px;height:1px;background:#555"></div>
<div style="left:1354.5px;top:548px;width:5px;height:5px;border-radius:50%;background:#111"></div>
<div style="left:1354.5px;top:563px;width:5px;height:5px;border-radius:50%;background:#111"></div>
<div style="left:1354.5px;top:576.5px;width:5px;height:5px;border-radius:50%;background:#111"></div>
<div style="left:1354.5px;top:589.5px;width:5px;height:5px;border-radius:50%;background:#111"></div>
<div style="left:1354.5px;top:603px;width:5px;height:5px;border-radius:50%;background:#111"></div>
<div style="left:1354.5px;top:616px;width:5px;height:5px;border-radius:50%;background:#111"></div>

<!-- COLUMN 5 TIROUD -->
<div style="left:1398px;top:163px;width:280px;height:266px;background:#000"></div>
<div style="left:1423px;top:192px;width:255px;height:208px;background:#fff"></div>
<div style="left:1437px;top:201px;width:6px;height:6px;border-radius:50%;background:#111"></div>
<div class="t bl" style="left:1445px;top:204px;font-size:4.6px;color:#333">Tiroud</div>
<div class="t bl" style="left:1467px;top:204px;font-size:3.2px;color:#888">Product</div>
<div class="t bl" style="left:1483px;top:204px;font-size:3.2px;color:#888">Solutions</div>
<div class="t bl" style="left:1501px;top:204px;font-size:3.2px;color:#888">Resources</div>
<div class="t bl" style="left:1521px;top:204px;font-size:3.2px;color:#888">Pricing</div>
<div style="left:1551px;top:201px;width:17px;height:6px;background:#f4f4f4;border-radius:3px"></div>
<div class="t bl" style="left:1554px;top:204px;font-size:3.2px;color:#333">Sign in</div>
<div class="t bl" style="left:1440px;top:227px;font-size:3.6px;color:#333"><span style="color:#1fb678">★</span>&nbsp; 4.7 ★ on TrustPilot</div>
<div class="t bl b" style="left:1438px;top:247px;font-size:16.8px;letter-spacing:-.55px;color:#111">Verified emails.</div>
<div class="t bl b" style="left:1438px;top:263px;font-size:16.8px;letter-spacing:-.55px;color:#111">Accurate Phone</div>
<div class="t bl b" style="left:1438px;top:280px;font-size:16.8px;letter-spacing:-.55px;color:#111">Numbers</div>
<div class="t bl" style="left:1438px;top:329px;font-size:3.9px;color:#555">The first prospecting tool that pulls live data in real-time as</div>
<div class="t bl" style="left:1438px;top:335px;font-size:3.9px;color:#555">you search—giving you accurate, reliable contact info you</div>
<div class="t bl" style="left:1438px;top:341px;font-size:3.9px;color:#555">can count on</div>
<div style="left:1438px;top:353px;width:37px;height:12px;border-radius:6px;background:#111"></div>
<div class="t c bl" style="left:1456px;top:359px;font-size:3.8px;color:#ddd">Try Tiroud free</div>
<div style="left:1478px;top:353px;width:32px;height:12px;border-radius:6px;background:#f5f5f5"></div>
<div class="t c bl" style="left:1494px;top:359px;font-size:3.8px;color:#444">Book a demo</div>
<div style="left:1423px;top:372px;width:255px;height:1px;background:#999"></div>
<div class="t bl b" style="left:1441px;top:386px;font-size:7px;letter-spacing:-.2px;color:#333">Rakuten</div>
<div style="left:1497px;top:383px;width:9px;height:7px;border:1.4px solid #222;border-radius:4px;box-sizing:border-box"></div>
<div class="t bl b" style="left:1507px;top:386px;font-size:4.5px;color:#333">HCR</div>
<div class="t bl b" style="left:1548px;top:386px;font-size:7px;letter-spacing:-.1px;color:#333">ᴍ.monday</div>
<div class="t bl" style="left:1620px;top:387px;font-size:7.5px;font-family:'Liberation Serif',serif;font-style:italic;color:#333">Disney</div>
<div class="bl" style="left:1580px;top:197px;width:98px;height:170px;border-radius:5px 0 0 5px;background:radial-gradient(ellipse 50px 55px at 30% 43%,#dfe212 0,rgba(218,224,30,.85) 50%,rgba(200,220,60,0) 100%),radial-gradient(ellipse 90px 60px at 100% 85%,#bed82c 0,rgba(190,216,60,0) 90%),linear-gradient(180deg,#a9bda0 0,#9bd064 18%,#b5d74f 40%,#8cab3a 72%,#86a64a 100%)"></div>
<div style="left:1616px;top:219px;width:62px;height:66px;background:rgba(255,255,255,.28);border-radius:3px 0 0 3px"></div>
<div style="left:1621px;top:224px;width:6px;height:6px;border-radius:50%;background:#fff"></div>
<div class="t bl" style="left:1630px;top:227px;font-size:3.6px;color:#333">Tiroud</div>
<div style="left:1620px;top:235px;width:58px;height:9px;background:rgba(255,255,255,.22);border-radius:2px"></div>
<div class="t bl" style="left:1622px;top:239px;font-size:2.9px;color:#666">Hi, what can I help you with today?</div>
<div style="left:1628px;top:247px;width:50px;height:19px;background:#3c4730;border-radius:2px 0 0 2px"></div>
<div style="left:1632px;top:251px;width:40px;height:1px;background:#bbb"></div><div style="left:1632px;top:255px;width:42px;height:1px;background:#bbb"></div><div style="left:1632px;top:260px;width:26px;height:1px;background:#bbb"></div>
<div class="t bl" style="left:1624px;top:273px;font-size:3px;color:#556">Generating ↗</div>
<div style="left:1611px;top:289px;width:67px;height:52px;background:rgba(238,246,200,.72);border-radius:4px 0 0 4px"></div>
<div style="left:1617px;top:294px;width:11px;height:12px;border-radius:50%;background:#4e3a30"></div>
<div class="t bl" style="left:1632px;top:298px;font-size:5px;color:#333">Emilia Smith</div>
<div class="t bl" style="left:1632px;top:305px;font-size:2.9px;color:#777">California, United States</div>
<div style="left:1617px;top:310px;width:40px;height:11px;border-radius:2px;background:rgba(255,255,255,.3)"></div>
<div class="t bl" style="left:1625px;top:315px;font-size:3.4px;color:#444">☎ 892-3899-85</div>
<div style="left:1615px;top:326px;width:63px;height:10px;background:#fff;border-radius:2px 0 0 2px"></div>
<div style="left:1619px;top:328px;width:6px;height:6px;border-radius:50%;background:#333"></div><div style="left:1624px;top:328px;width:6px;height:6px;border-radius:50%;background:#a3644a"></div>
<div class="t bl" style="left:1634px;top:331px;font-size:2.9px;color:#555">Other matching contacts found</div>
<div style="left:1586px;top:353px;width:8px;height:8px;border-radius:50%;background:#fff"></div>
<div class="t bl" style="left:1598px;top:357px;font-size:3.2px;color:#dfe8c0">Extract your customers with AI</div>

<!-- RAZORPAY 2 -->
<div style="left:1398px;top:436px;width:280px;height:184px;background:#eff3fb"></div>
<div class="t bl" style="left:1412px;top:466px;font-size:4.4px;color:#999">&lt;what.html?&gt;</div>
<div class="t bl s" style="left:1412px;top:480px;font-size:13.2px;letter-spacing:-.2px;color:#14a876">Not a developer?</div>
<div class="t bl s" style="left:1412px;top:496px;font-size:13.2px;letter-spacing:-.18px;color:#1b2b45">Our No-Code products have you covered</div>
<div style="left:1412px;top:520px;width:105px;height:76px;background:#fff"></div>
<div style="left:1524px;top:520px;width:105px;height:76px;background:#fff"></div>
<div style="left:1636px;top:520px;width:42px;height:76px;background:#fff;overflow:hidden"></div>
<div class="t bl" style="left:1418px;top:530px;font-size:4.8px;color:#888">Payment Links</div>
<div class="t bl" style="left:1530px;top:530px;font-size:4.8px;color:#888">Payment Pages</div>
<div style="left:1642px;top:526px;width:36px;height:70px;overflow:hidden">
<div class="t bl" style="left:0;top:4px;font-size:4.8px;color:#888">Payment Button</div>
<div class="t bl" style="left:0;top:17px;font-size:5.6px;color:#333">Effortlessly add</div>
<div class="t bl" style="left:0;top:26px;font-size:5.6px;color:#2e5ef2">button <span style="color:#333">without</span></div>
<div class="t bl" style="left:0;top:35px;font-size:5.6px;color:#333">knowledge</div>
<div class="t bl" style="left:0;top:60px;font-size:4.3px;color:#2e5ef2">Sign Up →&nbsp; &nbsp;Know</div></div>
<div style="left:1503px;top:527px;width:8px;height:6px;border:1px solid #5b80ea;box-sizing:border-box;border-radius:1px"></div>
<div style="left:1616px;top:526px;width:6px;height:7px;border:1px solid #5b80ea;box-sizing:border-box"></div>
<div class="t bl" style="left:1418px;top:543px;font-size:5.6px;color:#333">Accept payments instantly:</div>
<div class="t bl" style="left:1418px;top:552px;font-size:5.6px;color:#2e5ef2">Share links <span style="color:#333">via email, text, or</span></div>
<div class="t bl" style="left:1418px;top:561px;font-size:5.6px;color:#333">social.</div>
<div class="t bl" style="left:1418px;top:586px;font-size:4.3px;color:#2e5ef2">Sign Up →</div><div class="t bl" style="left:1447px;top:586px;font-size:4.3px;color:#2e5ef2">Know More ↗</div>
<div class="t bl" style="left:1530px;top:543px;font-size:5.6px;color:#333">Accept payments without</div>
<div class="t bl" style="left:1530px;top:552px;font-size:5.6px;color:#2e5ef2">coding on a custom-branded</div>
<div class="t bl" style="left:1530px;top:561px;font-size:5.6px;color:#2e5ef2">store</div>
<div class="t bl" style="left:1530px;top:586px;font-size:4.3px;color:#2e5ef2">Sign Up →</div><div class="t bl" style="left:1559px;top:586px;font-size:4.3px;color:#2e5ef2">Know More ↗</div>

<!-- PLAYFULL A -->
<div style="left:404px;top:797px;width:518px;height:243px;overflow:hidden;background:radial-gradient(ellipse 410px 175px at 50% 115%,#c46a24 0,#d5843f 45%,#e8b98a 72%,rgba(243,239,227,0) 100%),#f3efe3"></div>
<div class="t c" style="left:664px;top:819px;font-size:29.3px;letter-spacing:-.5px;font-family:'Liberation Serif',serif;color:#3b3517">Seamless revenue recovery</div>
<div class="t c" style="left:664px;top:846px;font-size:29.3px;letter-spacing:-.5px;font-family:'Liberation Serif',serif;color:#3b3517">for your healthcare practice</div>
<div class="t c bl" style="left:664px;top:880px;font-size:7.3px;color:#3b3517">You're leaving money on the table - we have software and</div>
<div class="t c bl" style="left:664px;top:890px;font-size:7.3px;color:#3b3517">services to help you get it back.</div>
<div style="left:606px;top:909px;width:114px;height:17px;background:#fcc020;border-radius:1px"></div>
<div class="t c bl" style="left:663px;top:917.5px;font-size:5.7px;color:#3b3517">Get a Free Revenue Assessment</div>
<div style="left:453px;top:977px;width:122px;height:63px;background:#f8f6e8;border-radius:4px 4px 0 0"></div>
<div style="left:460px;top:983px;width:12px;height:12px;background:#f8dcd6;border-radius:2px"></div>
<div class="t" style="left:464px;top:989px;font-size:5px;color:#d8556a">⏱</div>
<div class="t bl" style="left:476px;top:989px;font-size:5.7px;color:#555">Insight- Denials</div>
<div class="t b" style="left:460px;top:1009px;font-size:15px;color:#38341a">$132k</div>
<div style="left:510px;top:1003px;width:9px;height:8px;background:#f9d8d8;border-radius:2px"></div>
<div style="left:453px;top:1020px;width:122px;height:1px;background:#eee"></div>
<div class="t bl" style="left:460px;top:1030px;font-size:6.4px;color:#38341a">We recovered $132k in missing</div>
<div class="t bl" style="left:460px;top:1037px;font-size:6.4px;color:#38341a">revenue due to denials.</div>
<div style="left:582px;top:956px;width:135px;height:84px;background:#f8f6e8;border-radius:4px 4px 0 0"></div>
<div class="t bl" style="left:588px;top:966px;font-size:5.5px;color:#444">Outstanding Revenue</div>
<div class="t b" style="left:588px;top:982px;font-size:16.5px;color:#38341a">$80,000</div>
<div style="left:582px;top:994px;width:135px;height:1px;background:#e8e6d8"></div>
<div class="t bl" style="left:588px;top:1005px;font-size:5.5px;color:#444">Categories</div>
<div class="t bl" style="right:1208px;top:1005px;font-size:5.5px;color:#444">Total Revenue</div>
<div style="left:588px;top:1013px;width:91px;height:11px;background:#cfe1ef;border-radius:1px"></div>
<div class="t bl" style="left:592px;top:1018.5px;font-size:4.8px;color:#445">Awaiting payer &gt; 30 days</div>
<div class="t bl" style="right:1208px;top:1018.5px;font-size:4.5px;color:#ccc">$10,032</div>
<div style="left:588px;top:1027px;width:69px;height:13px;background:#cfe1ef;border-radius:1px"></div>
<div class="t bl" style="left:592px;top:1032.5px;font-size:4.8px;color:#445">Awaiting payer &lt; 30 days</div>
<div class="t bl" style="right:1208px;top:1032.5px;font-size:4.5px;color:#ccc">$2,032</div>
<div style="left:724px;top:974px;width:149px;height:24px;background:rgba(250,225,205,.75);border-radius:4px"></div>
<div style="left:724px;top:1001px;width:40px;height:22px;background:rgba(250,240,225,.85);border-radius:4px"></div>
<div style="left:724px;top:1031px;width:149px;height:9px;background:#f0cdbf;border-radius:4px 4px 0 0"></div>
<div style="left:818px;top:1034px;width:50px;height:6px;background:#eba43c"></div>

<!-- PLAYFULL B -->
<div style="left:929px;top:797px;width:495px;height:243px;overflow:hidden;background:radial-gradient(ellipse 210px 65px at 100% 100%,rgba(135,125,165,.95) 0,rgba(135,125,165,.55) 45%,rgba(135,125,165,0) 100%),radial-gradient(ellipse 190px 70px at 100% 50%,rgba(122,48,10,.92) 0,rgba(122,48,10,0) 100%),radial-gradient(ellipse 175px 85px at 0 33%,rgba(150,147,152,.95) 0,rgba(150,147,152,.55) 50%,rgba(150,147,152,0) 100%),linear-gradient(180deg,#f3efe2 0,#e4d6b4 9%,#cfa862 22%,#b97a2a 42%,#af6716 70%,#bd8226 90%,#c0903e 100%)"></div>
<div class="bl" style="left:1031px;top:848px;width:32px;height:38px;background:rgba(222,214,192,.55);transform:rotate(-16deg)"></div>
<div class="bl" style="left:1052px;top:924px;width:24px;height:31px;background:rgba(228,200,165,.5);transform:rotate(-6deg)"></div>
<div class="bl" style="left:1037px;top:969px;width:18px;height:22px;background:rgba(225,170,120,.55);transform:rotate(-22deg)"></div>
<div class="bl" style="left:1161px;top:962px;width:17px;height:14px;background:rgba(225,170,120,.55)"></div>
<div style="left:982px;top:872px;width:58px;height:12px;border-radius:6px;background:rgba(70,60,50,.65)"></div>
<div style="left:987px;top:875.5px;width:5px;height:5px;border-radius:50%;background:#f5d84a"></div>
<div class="t bl" style="left:995px;top:878px;font-size:6.2px;color:#eee">Appointments</div>
<div style="left:1070px;top:938px;width:37px;height:12px;border-radius:6px;background:rgba(70,55,40,.6)"></div>
<div style="left:1074px;top:941.5px;width:5px;height:5px;border-radius:50%;background:#5a8ed0"></div>
<div class="t bl" style="left:1083px;top:944px;font-size:6.2px;color:#eee">Claims</div>
<div style="left:1131px;top:907px;width:65px;height:11px;border-radius:6px;background:rgba(110,85,55,.55)"></div>
<div style="left:1135px;top:910px;width:5px;height:5px;border-radius:50%;background:#7a8a40"></div>
<div class="t bl" style="left:1144px;top:912.5px;font-size:6.2px;color:rgba(235,225,205,.6)">Patient payments</div>
<div style="left:1166px;top:914px;width:40px;height:10px;border-radius:5px;background:rgba(200,170,140,.35)"></div>
<div style="left:1205px;top:910px;width:41px;height:11px;border-radius:6px;background:rgba(110,70,40,.4)"></div>
<div style="left:1209px;top:913px;width:5px;height:5px;border-radius:50%;background:#e8a820"></div>
<div class="t bl" style="left:1217px;top:916px;font-size:6.2px;color:rgba(240,230,210,.6)">Eligibility</div>
<div style="left:1223px;top:942px;width:33px;height:12px;border-radius:6px;background:rgba(100,60,35,.45)"></div>
<div style="left:1228px;top:945.5px;width:5px;height:5px;border-radius:50%;background:#6a6ab0"></div>
<div class="t bl" style="left:1237px;top:948px;font-size:6.2px;color:rgba(245,235,220,.75)">ERAs</div>
<div style="left:1179px;top:968px;width:61px;height:12px;border-radius:6px;background:rgba(95,55,30,.55)"></div>
<div style="left:1183px;top:971.5px;width:5px;height:5px;border-radius:50%;background:#e85c2a"></div>
<div class="t bl" style="left:1191px;top:974px;font-size:6.2px;color:#eee">Payer Contracts</div>
<div style="left:1142px;top:898px;width:63px;height:66px;border-radius:50%;background:#f5f1e5"></div>

<!-- PLAYFULL C -->
<div style="left:1431px;top:797px;width:247px;height:243px;background:#f5f1e5"></div>
<div class="t bl" style="left:1569px;top:806px;font-size:7.2px;letter-spacing:-.1px;color:#3b3517">From small practices to digital health</div>
<div style="left:1600px;top:810px;width:78px;height:10px;overflow:hidden"><div class="t bl" style="left:46px;top:5px;font-size:7.2px;color:#3b3517">efficiently</div></div>
<svg class="p" style="left:1439px;top:863px;border-radius:3px" width="115" height="116" viewBox="0 0 115 116">
<defs><pattern id="st" width="11" height="10" patternUnits="userSpaceOnUse"><rect width="11" height="10" fill="#8a8884"/><rect x="4" width="4" height="10" fill="#a3a09b"/></pattern></defs>
<rect width="115" height="116" fill="url(#st)"/>
<rect y="100" width="115" height="16" fill="#6d6f73"/>
<path d="M5 105 Q8 62 30 56 L50 54 Q68 62 70 105Z" fill="#c2c7cb"/>
<path d="M33 55 L36 78 L44 78 L48 55Z" fill="#eaeaea"/>
<circle cx="37" cy="32" r="11" fill="#8c6a55"/><path d="M18 32 Q18 14 32 14 Q50 14 50 30 Q42 22 30 22 Q22 24 24 34Z" fill="#2b2527"/><path d="M24 55 L26 68 M52 55 L52 85" stroke="#4a5e82" stroke-width="2" fill="none"/>
<rect x="38" y="105" width="32" height="2" fill="#333"/>
<path d="M88 116 L90 62 Q100 50 115 55 V116Z" fill="#3e5f52"/><circle cx="108" cy="37" r="13" fill="#8a6450"/><path d="M94 28 Q102 14 115 17 V40 L110 36 L106 26 Z" fill="#3c2a22"/>
<rect x="10" y="96" width="27" height="12" rx="6" fill="none" stroke="#dcdcdc" stroke-width=".8"/>
</svg>
<div class="t" style="left:1447px;top:877px;font-size:11px;letter-spacing:-.2px;font-family:'Liberation Serif',serif;color:#f0ece4">Healthcare</div>
<div class="t" style="left:1447px;top:888px;font-size:11px;letter-spacing:-.2px;font-family:'Liberation Serif',serif;color:#f0ece4">Practitioners</div>
<svg class="p" style="left:1566px;top:923px;border-radius:3px 0 0 0" width="112" height="117" viewBox="0 0 112 117">
<rect width="112" height="117" fill="#835537"/>
<polygon points="0,0 60,0 75,30 70,45 0,45" fill="#8f8e8a"/>
<polygon points="75,0 112,0 112,30 90,18" fill="#2e2a28"/>
<polygon points="95,20 112,10 112,50" fill="#5a5048"/>
<path d="M20 0 Q55 5 75 0 L40 35 L20 30Z" fill="#8a7060" opacity=".7"/>
<polygon points="0,48 35,30 63,50 24,89 0,78" fill="#232324"/>
<g fill="#555"><rect x="12" y="50" width="3" height="3"/><rect x="20" y="44" width="3" height="3"/><rect x="28" y="40" width="3" height="3"/><rect x="18" y="56" width="3" height="3"/><rect x="26" y="50" width="3" height="3"/><rect x="34" y="46" width="3" height="3"/><rect x="24" y="62" width="3" height="3"/><rect x="32" y="56" width="3" height="3"/><rect x="40" y="52" width="3" height="3"/><rect x="34" y="66" width="3" height="3"/></g><rect x="48" y="46" width="6" height="6" fill="#a0a0a0"/>
<polygon points="0,66 22,78 18,84 0,74" fill="#777a70"/>
<path d="M30 90 Q50 72 75 78 L112 76 V100 L70 108 Q45 108 30 92Z" fill="#b08a78"/>
<rect x="8" y="96" width="21" height="12" rx="6" fill="none" stroke="#e9d4bb" stroke-width=".8"/>
</svg>
<div class="t" style="left:1574px;top:937px;font-size:11px;letter-spacing:-.2px;font-family:'Liberation Serif',serif;color:#f0ece4">Billing</div>
<div class="t" style="left:1574px;top:948px;font-size:11px;letter-spacing:-.2px;font-family:'Liberation Serif',serif;color:#f0ece4">Companies</div>
<div style="left:1431px;top:1033px;width:117px;height:7px;background:#5e5c58;border-radius:3px 3px 0 0"></div>
<div class="t bl" style="left:1434px;top:1036.5px;font-size:4.3px;color:#ddd">https://www.joyfulhealth.in/digital-health-organizations</div>

<!-- SCROLLBARS -->
<div style="left:1670px;top:41px;width:4.5px;height:402px;background:rgba(128,128,128,.55);border:.5px solid rgba(255,255,255,.18);border-radius:3px;box-sizing:border-box"></div>
<div style="left:245px;top:1032px;width:531px;height:4px;background:rgba(140,140,140,.55);border-radius:2px"></div>

<!-- TOP BAR -->
<div style="left:0;top:0;width:1919px;height:37px;background:#3a3a3a;border-bottom:1px solid #4a4a4a"></div>
<div style="left:39px;top:0;width:1px;height:37px;background:#4c4c4c"></div>
<div style="left:40px;top:0;width:236px;height:37px;background:#2c2c2c"></div>
<div style="left:276px;top:0;width:1px;height:37px;background:#4c4c4c"></div>
<svg class="i" style="left:13px;top:12px" width="14" height="14" viewBox="0 0 14 14" stroke-width="1"><path d="M1 6.5 7 1.5l6 5V13H9V8.5H5V13H1Z"/></svg>
<svg style="left:52px;top:11px;fill:none;stroke:#6da8cf;stroke-width:1.1" width="15" height="15" viewBox="0 0 24 24"><path d="M3 3C9 1 15 3 19 8L22 15 15 22 8 18C3 14 2 9 3 3Z"/><circle cx="11" cy="11" r="3"/></svg>
<div class="t b" style="left:76px;top:19px;font-size:10.9px;color:#e4e4e4">EAS Capital - Design, Webflow</div>
<svg class="i" style="left:250px;top:13px" width="12" height="12" viewBox="0 0 12 12" stroke-width=".9"><path d="M1 1 11 11M11 1 1 11"/></svg>
<svg class="i" style="left:291px;top:14px;stroke:#999" width="11" height="11" viewBox="0 0 11 11"><path d="M5.5 .5v10M.5 5.5h10"/></svg>
<div style="left:1719px;top:0;width:1px;height:37px;background:#4c4c4c"></div>
<svg class="i" style="left:1740px;top:16px;stroke:#a5a5a5" width="11" height="7" viewBox="0 0 11 7" stroke-width="1"><path d="M1 1l4.5 4.5L10 1"/></svg>
<svg style="left:1790px;top:19px" width="10" height="1" viewBox="0 0 10 1"><rect width="10" height="1" fill="#b5b5b5"/></svg>
<svg class="i" style="left:1840px;top:14px;stroke:#b5b5b5" width="11" height="11" viewBox="0 0 11 11" stroke-width="1"><rect x=".5" y="2.5" width="7.5" height="8"/><path d="M3 2.5V.5h7.5v8H8"/></svg>
<svg class="i" style="left:1890px;top:14px;stroke:#c5c5c5" width="11" height="11" viewBox="0 0 11 11" stroke-width="1"><path d="M.5.5l10 10M10.5.5l-10 10"/></svg>

<!-- LEFT PANEL -->
<div style="left:0;top:38px;width:241px;height:1002px;background:#2c2c2c;border-right:1px solid #454545;border-left:1px solid #3a3a3a;box-sizing:content-box"></div>
<svg class="i" style="left:19px;top:53px" width="13" height="18" viewBox="0 0 13 18" stroke-width="1.1"><path d="M6.5 1H3.5a2.5 2.5 0 0 0 0 5h3ZM6.5 1h3a2.5 2.5 0 0 1 0 5h-3ZM6.5 6.5h-3a2.5 2.5 0 0 0 0 5h3ZM6.5 9a2.5 2.5 0 1 0 5 0 2.5 2.5 0 1 0-5 0ZM6.5 12h-3a2.5 2.5 0 1 0 3 2.5Z"/></svg>
<svg class="i" style="left:38px;top:60px" width="6" height="4" viewBox="0 0 6 4" stroke-width="1"><path d="M.5.5 3 3 5.5.5"/></svg>
<svg class="i" style="left:209px;top:56px" width="16" height="12" viewBox="0 0 16 12" stroke-width="1"><rect x=".5" y=".5" width="15" height="11" rx="1.5"/><path d="M5.5.5v11"/></svg>
<div class="t b" style="left:18px;top:94px;font-size:13px;color:#ececec">EAS Capital - Design, Webf...</div>
<svg class="i" style="left:214px;top:92px;stroke:#bbb" width="6" height="4" viewBox="0 0 6 4" stroke-width="1"><path d="M.5.5 3 3 5.5.5"/></svg>
<div class="t" style="left:18px;top:114px;font-size:11.4px;color:#a5a5a5">Team project</div>
<div style="left:94px;top:106px;width:31px;height:16px;background:#2e4669;border-radius:4px"></div>
<div class="t" style="left:98px;top:114px;font-size:11.4px;color:#7fb1f2">Free</div>
<div style="left:1px;top:134px;width:240px;height:1px;background:#454545"></div>
<div style="left:9px;top:143px;width:35px;height:24px;background:#383838;border-radius:5px"></div>
<div class="t b" style="left:17px;top:155px;font-size:11.4px;color:#eee">File</div>
<div class="t" style="left:57px;top:155px;font-size:11.4px;color:#a5a5a5">Assets</div>
<svg class="i" style="left:214px;top:148px" width="14" height="14" viewBox="0 0 14 14" stroke-width="1"><circle cx="6.5" cy="6.5" r="5.5"/><path d="M10.5 10.5 13 13"/></svg>
<div style="left:1px;top:175px;width:240px;height:1px;background:#454545"></div>
<div class="t b" style="left:17px;top:196px;font-size:11.4px;color:#e8e8e8">Pages</div>
<svg class="i" style="left:215px;top:190px" width="11" height="11" viewBox="0 0 11 11" stroke-width="1"><path d="M5.5 0v11M0 5.5h11"/></svg>
<div style="left:17px;top:234px;width:208px;height:1px;background:#3f3f3f"></div>
<div style="left:9px;top:254px;width:224px;height:24px;background:#383838;border-radius:5px"></div>
<div class="t b" style="left:17px;top:266px;font-size:11.2px;color:#e8e8e8">Moodboard</div>
<div style="left:17px;top:298px;width:208px;height:1px;background:#3f3f3f"></div>
<div class="t" style="left:17px;top:330px;font-size:11.4px;color:#d8d8d8">Design</div>
<div class="t" style="left:17px;top:362px;font-size:11.4px;color:#d8d8d8">OG Exploration</div>
<div class="t" style="left:17px;top:394px;font-size:11.4px;color:#d8d8d8">V-1 // 22 -July [Old]</div>
<div style="left:17px;top:426px;width:208px;height:1px;background:#3f3f3f"></div>
<div style="left:1px;top:434px;width:240px;height:1px;background:#454545"></div>
<div class="t" style="left:17px;top:455px;font-size:11.4px;color:#e0e0e0">Layers</div>
<svg class="i" style="left:20px;top:486px" width="10" height="10" viewBox="0 0 10 10" stroke-width="1"><rect x=".5" y=".5" width="9" height="9" rx="1"/><path d="M.5 3.5h3.5V.5"/></svg>
<div class="t b" style="left:41px;top:491px;font-size:11.2px;color:#eee">Playfull</div>
<svg class="i" style="left:20px;top:518px" width="10" height="10" viewBox="0 0 10 10" stroke-width="1"><rect x=".5" y=".5" width="9" height="9" rx="1"/><path d="M.5 3.5h3.5V.5"/></svg>
<div class="t b" style="left:41px;top:523px;font-size:11.2px;color:#eee">Edgy</div>
<svg class="i" style="left:20px;top:550px" width="10" height="10" viewBox="0 0 10 10" stroke-width="1"><rect x=".5" y=".5" width="9" height="9" rx="1"/><path d="M.5 3.5h3.5V.5"/></svg>
<div class="t b" style="left:41px;top:555px;font-size:11.2px;color:#eee">Minimal</div>

<!-- RIGHT PANEL -->
<div style="left:1678px;top:38px;width:241px;height:1002px;background:#2c2c2c;border-left:1px solid #3d3d3d;box-sizing:border-box"></div>
<div style="left:1691px;top:50px;width:24px;height:24px;border-radius:50%;background:#fff"></div>
<div style="left:1693px;top:52px;width:20px;height:20px;border-radius:50%;background:#0bf58b"></div>
<svg style="left:1697px;top:56px" width="12" height="12" viewBox="0 0 12 12"><path d="M1 4 L4 2 H7 L10 4 V9 L7 11 H4 L2 8Z" fill="#0c2a1c"/><rect x="6" y="5" width="2" height="1.5" fill="#0bf58b"/></svg>
<svg class="i" style="left:1720px;top:60px" width="6" height="4" viewBox="0 0 6 4" stroke-width="1"><path d="M.5.5 3 3 5.5.5"/></svg>
<svg class="i" style="left:1812px;top:53px" width="17" height="19" viewBox="0 0 17 19" stroke-width="1.1"><path d="M1 2.2Q1 .7 2.4 1.5L15.5 8.6Q16.6 9.5 15.5 10.4L2.4 17.5Q1 18.3 1 16.8Z"/></svg>
<svg class="i" style="left:1840px;top:60px" width="6" height="4" viewBox="0 0 6 4" stroke-width="1"><path d="M.5.5 3 3 5.5.5"/></svg>
<div style="left:1856px;top:46px;width:55px;height:32px;background:#0d8ce9;border-radius:6px"></div>
<div class="t c b" style="left:1883.5px;top:62px;font-size:11.5px;color:#fff">Share</div>
<div style="left:1687px;top:86px;width:53px;height:24px;background:#383838;border-radius:5px"></div>
<div class="t b" style="left:1695px;top:98px;font-size:11.4px;color:#eee">Design</div>
<div class="t" style="left:1752px;top:98px;font-size:11.4px;color:#a5a5a5">Prototype</div>
<div class="t" style="left:1869px;top:98px;font-size:11.4px;color:#e4e4e4">35%</div>
<svg class="i" style="left:1896px;top:96px" width="6" height="4" viewBox="0 0 6 4" stroke-width="1"><path d="M.5.5 3 3 5.5.5"/></svg>
<div style="left:1679px;top:118px;width:240px;height:1px;background:#454545"></div>
<div class="t b" style="left:1695px;top:139px;font-size:11.4px;color:#e8e8e8">Page</div>
<div style="left:1695px;top:163px;width:184px;height:24px;background:#383838;border-radius:5px"></div>
<div style="left:1824px;top:163px;width:1px;height:24px;background:#2c2c2c"></div>
<div style="left:1701px;top:169px;width:12px;height:12px;background:#202020;border-radius:2px"></div>
<div class="t" style="left:1720px;top:175px;font-size:11.4px;color:#e4e4e4">202020</div>
<div class="t" style="left:1833px;top:175px;font-size:11.4px;color:#e4e4e4">100</div>
<div class="t" style="left:1864px;top:175px;font-size:11.4px;color:#aaa">%</div>
<svg class="i" style="left:1892px;top:169px" width="14" height="12" viewBox="0 0 14 12" stroke-width="1"><path d="M.7 6Q7-1.5 13.3 6 7 13.5.7 6Z"/><circle cx="7" cy="6" r="2"/></svg>
<div style="left:1679px;top:203px;width:240px;height:1px;background:#454545"></div>
<div class="t b" style="left:1695px;top:224px;font-size:11.4px;color:#e8e8e8">Variables</div>
<svg class="i" style="left:1893px;top:218px" width="12" height="12" viewBox="0 0 12 12" stroke-width="1"><path d="M3 0v3.5M3 8v4M9 0v1.5M9 6v6"/><circle cx="3" cy="5.8" r="2"/><circle cx="9" cy="3.8" r="2"/></svg>
<div style="left:1679px;top:244px;width:240px;height:1px;background:#454545"></div>
<div class="t b" style="left:1695px;top:265px;font-size:11.4px;color:#9e9e9e">Styles</div>
<svg class="i" style="left:1893px;top:259px;stroke:#c5c5c5" width="11" height="11" viewBox="0 0 11 11" stroke-width="1"><path d="M5.5 0v11M0 5.5h11"/></svg>
<div style="left:1679px;top:285px;width:240px;height:1px;background:#454545"></div>
<div class="t b" style="left:1695px;top:306px;font-size:11.4px;color:#9e9e9e">Export</div>
<svg class="i" style="left:1893px;top:300px;stroke:#c5c5c5" width="11" height="11" viewBox="0 0 11 11" stroke-width="1"><path d="M5.5 0v11M0 5.5h11"/></svg>
<div style="left:1679px;top:326px;width:240px;height:1px;background:#454545"></div>
<div class="t b" style="left:1695px;top:343px;font-size:11.4px;color:#e8e8e8">Plugin</div>
<div style="left:1693px;top:373px;width:20px;height:20px;background:#000;border-radius:5px"></div>
<div style="left:1702px;top:378px;width:2px;height:2px;background:#eee;border-radius:50%"></div>
<div style="left:1702px;top:385px;width:2px;height:2px;background:#eee;border-radius:50%"></div>
<div class="t" style="left:1719px;top:383px;font-size:11.4px;color:#e8e8e8">Ratios</div>
<svg style="left:1893px;top:382px" width="12" height="1" viewBox="0 0 12 1"><rect width="12" height="1" fill="#e4e4e4"/></svg>
<div style="left:1863px;top:983px;width:32px;height:32px;border-radius:50%;background:#2c2c2c;box-shadow:0 1px 4px rgba(0,0,0,.5)"></div>
<div class="t c" style="left:1879px;top:999px;font-size:13px;color:#e8e8e8">?</div>

<!-- TOOLBAR -->
<div style="left:727px;top:979px;width:465px;height:48px;background:#2c2c2c;border-radius:13px;box-shadow:0 2px 8px rgba(0,0,0,.45)"></div>
<div style="left:736px;top:987px;width:32px;height:32px;background:#0d8ce9;border-radius:5px"></div>
<svg style="left:741px;top:992px;fill:none;stroke:#fff;stroke-width:1.2;stroke-linejoin:round" width="22" height="22" viewBox="0 0 22 22"><path d="M3 3 20 9 12 12 9 20Z"/></svg>
<svg class="i" style="left:773px;top:1001px" width="7" height="5" viewBox="0 0 7 5" stroke-width="1.1"><path d="M1 1l2.5 2.5L6 1"/></svg>
<svg class="i" style="left:800px;top:994px" width="18" height="18" viewBox="0 0 18 18" stroke-width="1.2"><path d="M5 0v18M13 0v18M0 4.5h18M0 13.5h18"/></svg>
<svg class="i" style="left:830px;top:1001px" width="7" height="5" viewBox="0 0 7 5" stroke-width="1.1"><path d="M1 1l2.5 2.5L6 1"/></svg>
<svg class="i" style="left:858px;top:995px" width="16" height="16" viewBox="0 0 16 16" stroke-width="1.1"><rect x=".5" y=".5" width="15" height="15" rx="1.5"/></svg>
<svg class="i" style="left:887px;top:1001px" width="7" height="5" viewBox="0 0 7 5" stroke-width="1.1"><path d="M1 1l2.5 2.5L6 1"/></svg>
<svg class="i" style="left:913px;top:993px" width="20" height="20" viewBox="0 0 24 24" stroke-width="1.3"><path d="M2 3C8 1 14 3 18 8L22 16 16 22 9 18C3 14 1 9 2 3Z"/><circle cx="11" cy="11" r="2.8"/></svg>
<svg class="i" style="left:944px;top:1001px" width="7" height="5" viewBox="0 0 7 5" stroke-width="1.1"><path d="M1 1l2.5 2.5L6 1"/></svg>
<svg class="i" style="left:972px;top:996px" width="15" height="15" viewBox="0 0 15 15" stroke-width="1.1"><path d="M.5 2.5V.5h14v2M7.5.5V14.5M5 14.5h5"/></svg>
<svg class="i" style="left:1012px;top:995px" width="16" height="16" viewBox="0 0 16 16" stroke-width="1.1"><path d="M8.5.5a7.5 7.5 0 0 1 0 15H2.5Q.5 15.5.5 13.5V8.5A8 8 0 0 1 8.5.5Z"/></svg>
<svg class="i" style="left:1051px;top:994px" width="18" height="18" viewBox="0 0 18 18" stroke-width="1.1"><path d="M4.5 1 8 4.5 4.5 8 1 4.5Z"/><circle cx="13.5" cy="4.5" r="3.3"/><rect x="1.5" y="10.5" width="6" height="6" rx=".8"/><path d="M13.5 10v7M10 13.5h7"/></svg>
<div style="left:1084px;top:979px;width:1px;height:48px;background:#3f3f3f"></div>
<div style="left:1093px;top:987px;width:92px;height:31px;background:#444;border-radius:6px"></div>
<div style="left:1125px;top:990px;width:27px;height:26px;background:#2b2b2b;border-radius:5px"></div>
<svg class="i" style="left:1101px;top:995px;stroke:#bdbdbd" width="16" height="16" viewBox="0 0 16 16" stroke-width="1.1"><path d="M2 8 7 2 4 10 10 4 6 13 13 7 10 14"/></svg>
<svg class="i" style="left:1131px;top:995px;stroke:#7cc4f4" width="16" height="16" viewBox="0 0 16 16" stroke-width="1.1"><path d="M1 14V1h12v4H6v9ZM1 5h5M1 9h5"/><path d="M8 8l7 2-3 1.5L11 15Z"/></svg>
<svg class="i" style="left:1161px;top:996px;stroke:#bdbdbd" width="16" height="14" viewBox="0 0 16 14" stroke-width="1.1"><path d="M4 3 .8 7 4 11M12 3l3.2 4L12 11M9.5 1 6.5 13"/></svg>
</body></html>
